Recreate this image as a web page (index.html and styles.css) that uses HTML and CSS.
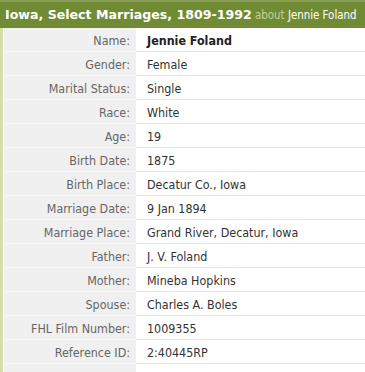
FILE: index.html
```html
<!DOCTYPE html>
<html>
<head>
<meta charset="utf-8">
<link rel="stylesheet" href="styles.css">
</head>
<body>
<div class="record">
  <h1 class="title"><b>Iowa, Select Marriages, 1809-1992</b> <span class="about">about</span> Jennie Foland</h1>
  <div class="body">
    <div class="grid">
      <div class="lab">Name:</div><div class="val"><b>Jennie Foland</b></div>
      <div class="lab">Gender:</div><div class="val">Female</div>
      <div class="lab">Marital Status:</div><div class="val">Single</div>
      <div class="lab">Race:</div><div class="val">White</div>
      <div class="lab">Age:</div><div class="val">19</div>
      <div class="lab">Birth Date:</div><div class="val">1875</div>
      <div class="lab">Birth Place:</div><div class="val">Decatur Co., Iowa</div>
      <div class="lab">Marriage Date:</div><div class="val">9 Jan 1894</div>
      <div class="lab">Marriage Place:</div><div class="val">Grand River, Decatur, Iowa</div>
      <div class="lab">Father:</div><div class="val">J. V. Foland</div>
      <div class="lab">Mother:</div><div class="val">Mineba Hopkins</div>
      <div class="lab">Spouse:</div><div class="val">Charles A. Boles</div>
      <div class="lab">FHL Film Number:</div><div class="val">1009355</div>
      <div class="lab">Reference ID:</div><div class="val">2:40445RP</div>
      <div class="lab"></div><div class="val"></div>
    </div>
  </div>
</div>
</body>
</html>
```
FILE: styles.css
```css
html, body {
  margin: 0;
  padding: 0;
  background: #ffffff;
}
.record {
  font-family: "DejaVu Sans", Verdana, sans-serif;
  font-stretch: condensed;
  width: 365px;
}
.title {
  margin: 0;
  height: 26px;
  border-top: 2px solid #879c55;
  background: #718b35;
  color: #ffffff;
  font-size: 11.4px;
  font-weight: normal;
  line-height: 26px;
  padding-left: 5px;
  white-space: nowrap;
  overflow: hidden;
}
.title b {
  font-weight: bold;
  font-stretch: normal;
  font-size: 12.6px;
}
.about {
  color: #c3d196;
}
.body {
  border-left: 3px solid #d5e0a9;
  padding-left: 1px;
}
.grid {
  display: grid;
  grid-template-columns: 132px 1fr;
  font-size: 12.4px;
}
.lab, .val {
  height: 23px;
  line-height: 25px;
  white-space: nowrap;
  overflow: hidden;
}
.lab {
  background: #f0f0f0;
  color: #666666;
  text-align: right;
  padding-right: 6px;
  border-bottom: 1px solid #f7f7f7;
}
.val {
  background: #ffffff;
  color: #333333;
  padding-left: 11px;
  border-bottom: 1px solid #e6e6e6;
}
.val b {
  color: #222222;
}
```
